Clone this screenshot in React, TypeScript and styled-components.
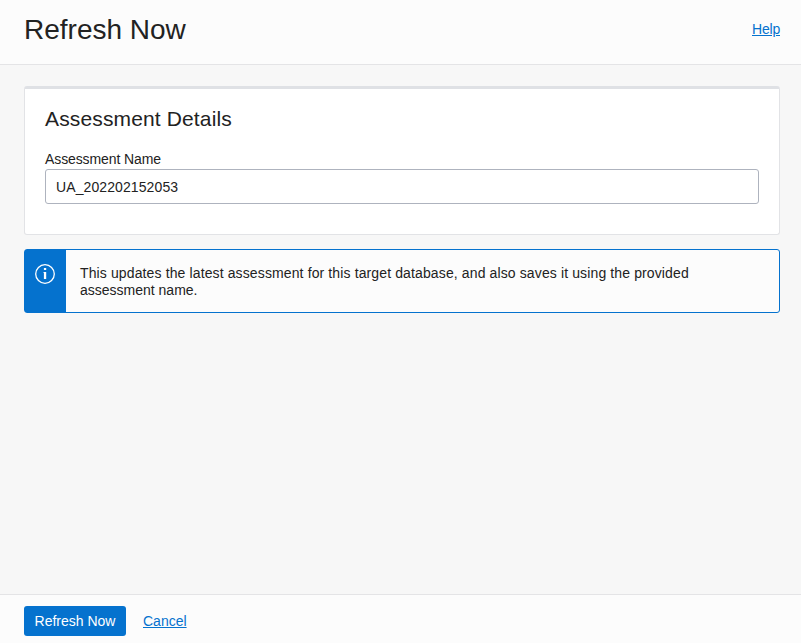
import React from "react";
import styled, { createGlobalStyle } from "styled-components";

const Global = createGlobalStyle`
  * { box-sizing: border-box; }
  body { margin: 0; font-family: "Liberation Sans", Arial, sans-serif; font-size: 14px; color: #222; }
`;
const Page = styled.div`
  height: 643px; display: flex; flex-direction: column; background: #f7f7f7;
`;
const Header = styled.header`
  height: 65px; display: flex; justify-content: space-between; align-items: flex-start;
  padding: 14px 21px 0 24px; background: #fcfcfc; border-bottom: 1px solid #e4e4e6;
`;
const Title = styled.h1`
  margin: 0; font-size: 28px; line-height: 32px; font-weight: 400;
`;
const Link = styled.a`
  color: #0572ce; text-decoration: underline; line-height: 16px; cursor: pointer;
`;
const HelpLink = styled(Link)` margin-top: 7px; letter-spacing: -0.2px; `;
const Main = styled.main`
  flex: 1; padding: 21px 21px 0 24px;
`;
const Card = styled.section`
  height: 149px; padding: 18px 20px 0; background: #fff;
  border: 1px solid #e2e3e6; border-top: 3px solid #dfe1e5; border-radius: 3px;
`;
const CardTitle = styled.h2`
  margin: 0; font-size: 21px; line-height: 24px; font-weight: 400; letter-spacing: 0.14px;
`;
const Label = styled.label`
  display: block; margin-top: 20px; line-height: 16px; letter-spacing: -0.1px;
`;
const Input = styled.input`
  display: block; width: 100%; height: 35px; margin-top: 2px; padding: 0 10px;
  font: inherit; letter-spacing: 0.1px; color: inherit; background: #fff;
  border: 1px solid #aeb3be; border-radius: 3px; outline: none;
`;
const Notice = styled.div`
  height: 64px; margin-top: 14px; display: flex; background: #fcfcfc;
  border: 1px solid #0572ce; border-radius: 3px;
`;
const NoticeIcon = styled.div`
  width: 41px; flex: none; padding: 13px 0 0 9px; background: #0572ce;
  svg { display: block; }
`;
const NoticeText = styled.p`
  margin: 0; padding: 15px 60px 0 14px; line-height: 17px;
`;
const FirstLine = styled.span` display: block; letter-spacing: 0.123px; `;
const Footer = styled.footer`
  height: 49px; display: flex; gap: 17px; padding: 11px 24px 0;
  background: #fcfcfc; border-top: 1px solid #e4e4e6;
`;
const Button = styled.button`
  width: 102px; height: 30px; padding: 0; border: 0; border-radius: 3px;
  background: #0572ce; color: #fff; font: inherit;
`;
const CancelLink = styled(Link)` margin-top: 7px; `;

export default function App() {
  return (
    <Page>
      <Global />
      <Header><Title>Refresh Now</Title><HelpLink>Help</HelpLink></Header>
      <Main>
        <Card>
          <CardTitle>Assessment Details</CardTitle>
          <Label htmlFor="name">Assessment Name</Label>
          <Input id="name" defaultValue="UA_202202152053" />
        </Card>
        <Notice>
          <NoticeIcon>
            <svg width="22" height="22" viewBox="0 0 22 22" fill="none">
              <circle cx="11" cy="11" r="9.3" stroke="#fff" strokeWidth="1.3" />
              <path d="M9.9 5h2.3v2H9.9zM9.4 9h2.8v7H9.9V9.8h-.5z" fill="#fff" />
            </svg>
          </NoticeIcon>
          <NoticeText>
            <FirstLine>This updates the latest assessment for this target database, and also saves it using the provided</FirstLine>{" "}
            assessment name.
          </NoticeText>
        </Notice>
      </Main>
      <Footer><Button>Refresh Now</Button><CancelLink>Cancel</CancelLink></Footer>
    </Page>
  );
}
